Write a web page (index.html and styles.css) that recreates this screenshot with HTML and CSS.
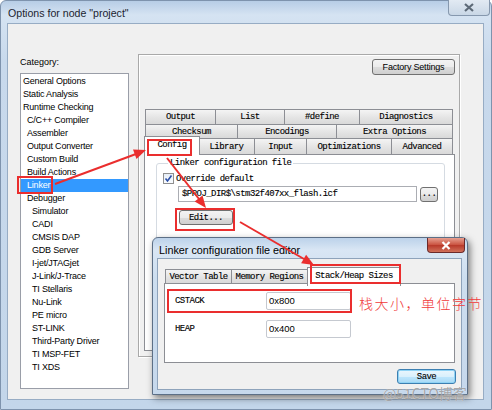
FILE: index.html
```html
<!DOCTYPE html>
<html>
<head>
<meta charset="utf-8">
<link rel="stylesheet" href="styles.css">
</head>
<body>
<div class="screen">
  <div class="window">
    <div class="titlebar">
      <span class="title">Options for node "project"</span>
      <span class="close-main"><svg width="14" height="9" viewBox="0 0 14 9"><path d="M3 1 L11 8 M11 1 L3 8" stroke="#5d6a78" stroke-width="2.2"/></svg></span>
    </div>
    <div class="client">
      <div class="left">
        <div class="cat-label">Category:</div>
        <div class="listbox">
          <div class="item l0">General Options</div>
          <div class="item l0">Static Analysis</div>
          <div class="item l0">Runtime Checking</div>
          <div class="item l1">C/C++ Compiler</div>
          <div class="item l1">Assembler</div>
          <div class="item l1">Output Converter</div>
          <div class="item l1">Custom Build</div>
          <div class="item l1">Build Actions</div>
          <div class="item l1 sel">Linker</div>
          <div class="item l1">Debugger</div>
          <div class="item l2">Simulator</div>
          <div class="item l2">CADI</div>
          <div class="item l2">CMSIS DAP</div>
          <div class="item l2">GDB Server</div>
          <div class="item l2">I-jet/JTAGjet</div>
          <div class="item l2">J-Link/J-Trace</div>
          <div class="item l2">TI Stellaris</div>
          <div class="item l2">Nu-Link</div>
          <div class="item l2">PE micro</div>
          <div class="item l2">ST-LINK</div>
          <div class="item l2">Third-Party Driver</div>
          <div class="item l2">TI MSP-FET</div>
          <div class="item l2">TI XDS</div>
        </div>
      </div>
      <div class="panel">
        <div class="panel-top"><div class="btn factory">Factory Settings</div></div>
        <div class="tabctl">
          <div class="tabrow r1">
            <div class="tab">Output</div><div class="tab">List</div><div class="tab">#define</div><div class="tab">Diagnostics</div>
          </div>
          <div class="tabrow r2">
            <div class="tab">Checksum</div><div class="tab">Encodings</div><div class="tab">Extra Options</div>
          </div>
          <div class="tabrow r3">
            <div class="tab sel">Config</div><div class="tab">Library</div><div class="tab">Input</div><div class="tab">Optimizations</div><div class="tab">Advanced</div>
          </div>
          <div class="tabpage">
            <fieldset class="group">
              <legend>Linker configuration file</legend>
              <div class="chkrow">
                <span class="chkbox"><svg width="9" height="9" viewBox="0 0 9 9"><path d="M1.5 4.5 L3.5 7 L7.5 1.5" fill="none" stroke="#2a4fa8" stroke-width="1.6"/></svg></span>
                <span class="mono">Override default</span>
              </div>
              <div class="pathrow">
                <div class="field mono">$PROJ_DIR$\stm32f407xx_flash.icf</div>
                <div class="btn dots mono">...</div>
              </div>
              <div class="btn edit mono">Edit...</div>
            </fieldset>
          </div>
        </div>
      </div>
    </div>
  </div>

  <div class="dialog">
    <div class="dlg-title">
      <span class="dlg-text">Linker configuration file editor</span>
      <span class="dlg-close"><svg width="12" height="9" viewBox="0 0 12 9"><path d="M2.5 1 L9.5 8 M9.5 1 L2.5 8" stroke="#fff" stroke-width="2.2"/></svg></span>
    </div>
    <div class="dlg-client">
      <div class="dtabrow">
        <div class="tab">Vector Table</div><div class="tab">Memory Regions</div><div class="tab sel">Stack/Heap Sizes</div>
      </div>
      <div class="dtabpage">
        <div class="srow"><span class="slabel mono">CSTACK</span><span class="sfield">0x800</span></div>
        <div class="srow"><span class="slabel mono">HEAP</span><span class="sfield">0x400</span></div>
      </div>
      <div class="dlg-foot"><div class="btn save mono">Save</div></div>
    </div>
  </div>

  <svg class="annot" width="492" height="410" viewBox="0 0 492 410">
    <g fill="none" stroke="#ea2e2e" stroke-width="2">
      <rect x="18" y="177" width="34" height="16"/>
      <rect x="148" y="140" width="43" height="15"/>
      <rect x="176" y="209" width="58" height="21"/>
      <rect x="311" y="265" width="89" height="18"/>
      <rect x="168" y="290" width="183" height="22"/>
      <line x1="55" y1="184" x2="136" y2="154"/>
      <line x1="167" y1="158" x2="199" y2="199"/>
      <line x1="240" y1="222" x2="304" y2="259"/>
    </g>
    <g fill="#ea2e2e">
      <polygon points="146,150 136.5,158.9 133,149.5"/>
      <polygon points="206,208 194.6,201.6 202.5,195.4"/>
      <polygon points="314,265 301.1,263.3 306.1,254.7"/>
    </g>
  </svg>
  <div class="note">栈大小，单位字节</div>
  <div class="watermark">@51CTO博客</div>
</div>
</body>
</html>
```

FILE: styles.css
```css
* { box-sizing: border-box; }
body { margin: 0; background: #fff; }
.screen { position: relative; width: 492px; height: 410px; overflow: hidden; font-family: "Liberation Sans", Arial, sans-serif; }
.mono { font-family: "Liberation Mono", "Courier New", monospace; }

.window {
  width: 492px; height: 410px;
  display: flex; flex-direction: column;
  padding: 0 7px 9px 6px;
  background: linear-gradient(180deg, #b7cde6 0px, #d5e3f2 14px, #c8d9ec 60px, #c3d6ea 100%);
  border: 1px solid #7e93ad;
  border-radius: 6px 6px 0 0;
}
.titlebar { height: 22px; display: flex; align-items: flex-start; justify-content: space-between; }
.title { font-size: 10.6px; color: #1b2430; padding: 6px 0 0 1px; }
.close-main {
  width: 42px; height: 16px; margin-right: -6px; margin-top: -1px;
  border: 1px solid #8698ae; border-top: none; border-radius: 0 0 4px 4px;
  background: linear-gradient(#e2eaf3, #c9d7e6);
  display: flex; align-items: center; justify-content: center;
}

.client {
  flex: 1; display: flex; align-items: flex-start;
  background: #f0f0f0; border: 1px solid #97acc4;
}

.left { margin: 32px 0 0 12px; }
.cat-label { font-size: 9px; line-height: 12px; height: 12px; color: #000; }
.listbox {
  margin-top: 5px; width: 109px; height: 316px;
  background: #fff; border: 1px solid #9a9ea8; padding-top: 1px;
}
.item { height: 13px; line-height: 13px; font-size: 9px; letter-spacing: -0.2px; color: #000; white-space: nowrap; }
.l0 { padding-left: 2px; }
.l1 { padding-left: 6px; }
.l2 { padding-left: 11px; }
.item.sel { background: #3399ff; color: #fff; }

.panel {
  margin: 30px 0 0 9px; width: 322px; height: 303px;
  border: 1px solid #a9a9a9;
  box-shadow: inset 1px 1px 0 #fff, 1px 1px 0 #fff;
}
.panel-top { display: flex; justify-content: flex-end; padding: 4px 4px 0 0; }

.btn {
  border: 1px solid #707070; border-radius: 3px;
  background: linear-gradient(#f3f3f3 0%, #ebebeb 50%, #dddddd 51%, #cfcfcf 100%);
  display: flex; align-items: center; justify-content: center;
  color: #000; white-space: nowrap;
}
.factory { width: 83px; height: 16px; font-size: 9px; letter-spacing: -0.2px; }

.tabctl { margin: 34px 0 0 5px; width: 311px; }
.tabrow { display: grid; margin-left: 1px; width: 308px; }
.r1 { grid-template-columns: 71px 69px 75px 93px; grid-template-rows: 15px; }
.r2 { grid-template-columns: 93px 99px 116px; grid-template-rows: 14px; }
.r3 { grid-template-columns: 54px 56px 52px 85px 61px; grid-template-rows: 16px; }
.tab {
  border: 1px solid #8c8e94; border-bottom: none; border-left: none;
  background: linear-gradient(#f4f4f4, #e4e4e4 55%, #d9d9d9);
  font-family: "Liberation Mono", "Courier New", monospace;
  font-size: 9px; letter-spacing: -0.55px; color: #000;
  -webkit-text-stroke: 0.12px #000;
  display: flex; align-items: center; justify-content: center; white-space: nowrap;
}
.tabrow .tab:first-child, .dtabrow .tab:first-child { border-left: 1px solid #8c8e94; }
.tab.sel {
  background: #fff; margin-top: -2px; height: 19px; position: relative; z-index: 2;
  border-left: 1px solid #8c8e94; margin-left: -1px; margin-right: -1px;
  align-items: flex-start; padding-top: 3px;
}
.tabpage { height: 197px; background: #fff; border: 1px solid #8c8e94; padding: 3px 0 0 11px; }

.group {
  margin: 0; width: 289px; height: 188px;
  border: 1px solid #d5dbe2; border-radius: 3px;
  padding: 0 0 0 6px;
}
.group legend {
  margin-left: 5px; padding: 0 2px; line-height: 10px;
  font-family: "Liberation Mono", "Courier New", monospace;
  font-size: 9px; letter-spacing: -0.55px; color: #000;
  -webkit-text-stroke: 0.12px #000;
}
.group .mono { font-size: 9px; letter-spacing: -0.55px; color: #000; -webkit-text-stroke: 0.12px #000; }
.chkrow { display: flex; align-items: center; margin-top: 5px; height: 11px; gap: 2px; }
.chkbox {
  width: 11px; height: 11px; border: 1px solid #8f8f8f;
  background: linear-gradient(#e6eef7, #fafcff);
  display: flex; align-items: center; justify-content: center;
}
.pathrow { display: flex; align-items: flex-start; margin: 2px 0 0 15px; }
.field {
  width: 239px; height: 16px; border: 1px solid #abadb3; background: #fff;
  padding-left: 3px; display: flex; align-items: center; white-space: nowrap; overflow: hidden;
}
.dots { width: 18px; height: 15px; margin: 1px 0 0 3px; color: #555; align-items: flex-end; padding-bottom: 2px; }
.edit { width: 54px; height: 15px; margin: 8px 0 0 16px; }

.dialog {
  position: absolute; left: 152px; top: 237px; width: 316px; height: 158px;
  border: 1px solid #5c6f86; border-radius: 6px 6px 0 0;
  background: linear-gradient(180deg, #bcd2ea 0px, #d9e6f4 12px, #cddeef 40px, #c6d8ec 100%);
  box-shadow: 2px 3px 7px rgba(0,0,0,0.5);
  display: flex; flex-direction: column;
  padding: 0 5px 4px 4px;
  z-index: 5;
}
.dlg-title { height: 20px; display: flex; align-items: flex-start; justify-content: space-between; }
.dlg-text { font-size: 10.8px; color: #000; padding: 6px 0 0 2px; }
.dlg-close {
  width: 38px; height: 15px; margin-right: -3px;
  border: 1px solid #6b2a2a; border-top: none; border-radius: 0 0 4px 4px;
  background: linear-gradient(#e8a090, #c9513f 50%, #b8392a 52%, #d0705a);
  display: flex; align-items: center; justify-content: center;
}
.dlg-client {
  flex: 1; background: #f0f0f0; border: 1px solid #8ea3bb;
  padding: 10px 6px 0 6px;
}
.dtabrow { display: grid; grid-template-columns: 67px 76px 92px; grid-template-rows: 14px; margin-left: 1px; }
.dtabpage { height: 80px; background: #fff; border: 1px solid #8c8e94; padding: 8px 0 0 10px; }
.srow { display: flex; align-items: center; height: 18px; margin-bottom: 10px; }
.slabel { width: 91px; font-size: 9px; letter-spacing: -0.55px; color: #000; -webkit-text-stroke: 0.12px #000; }
.sfield {
  width: 85px; height: 18px; border: 1px solid #c5c9d0; border-radius: 2px; background: #fff;
  font-size: 9.5px; padding: 2px 0 0 2px; color: #000;
}
.dlg-foot { display: flex; justify-content: flex-end; margin: 6px -1px 0 0; }
.save {
  width: 59px; height: 15px; font-size: 9px; letter-spacing: -0.55px; -webkit-text-stroke: 0.12px #000;
  border: 1px solid #3c7fb1;
  background: linear-gradient(#eaf6fd 0%, #d9f0fc 50%, #bee6fd 51%, #a7d9f5 100%);
  box-shadow: inset 0 0 0 1px #8fd3f5;
}

.annot { position: absolute; left: 0; top: 0; z-index: 10; pointer-events: none; }
.note {
  position: absolute; left: 359px; top: 294px; z-index: 11;
  font-family: "Noto Sans CJK SC", sans-serif; font-size: 14px; line-height: 18px;
  letter-spacing: 1.5px; color: #f03a3a; font-weight: 300; white-space: nowrap;
}
.watermark {
  position: absolute; left: 383px; top: 384px; z-index: 11;
  font-family: "Noto Sans CJK SC", "Liberation Sans", sans-serif; font-size: 14px; line-height: 18px;
  color: rgba(130,130,130,0.7); white-space: nowrap;
  text-shadow: 0 0 1px rgba(255,255,255,0.9);
}
```
